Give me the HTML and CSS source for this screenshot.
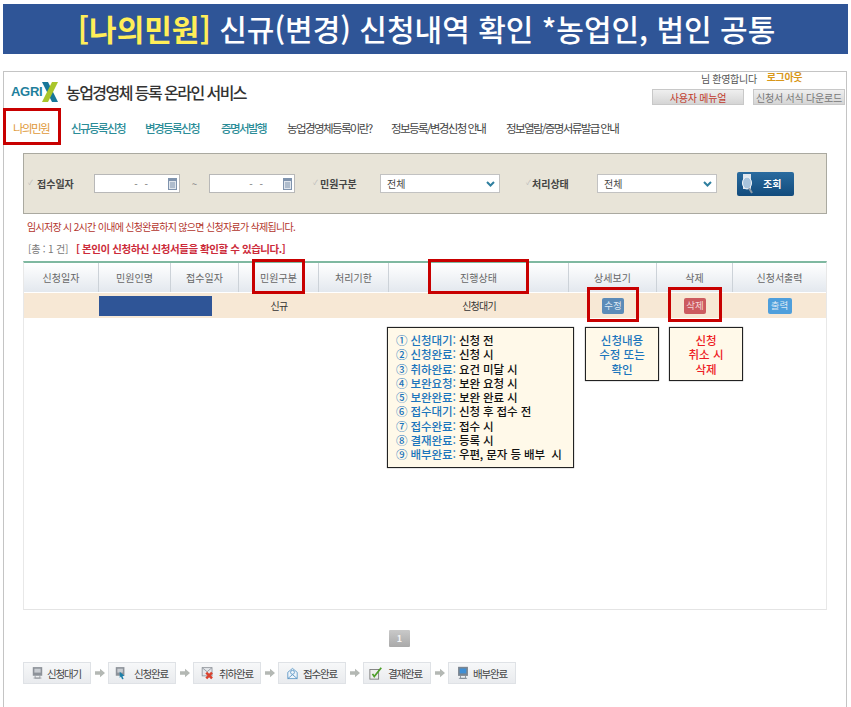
FILE: index.html
```html
<!DOCTYPE html>
<html lang="ko">
<head>
<meta charset="utf-8">
<title>나의민원</title>
<link rel="stylesheet" href="styles.css">
</head>
<body>
<h1 class="banner"><span class="banner-key">[나의민원]</span> 신규(변경) 신청내역 확인 *농업인, 법인 공통</h1>
<main class="frame">
  <header class="top">
    <div class="brand">
      <span class="logo"><span class="logo-text">AGRI</span><svg class="logo-x" width="16" height="20" viewBox="0 0 16 20"><path d="M0 0h6l10 20h-6z" fill="#17779a"/><path d="M16 0h-6L0 20h6z" fill="#a9c52a"/></svg></span>
      <span class="brand-title">농업경영체 등록 온라인 서비스</span>
    </div>
    <div class="util">
      <div class="welcome"><span>님 환영합니다</span><a class="logout">로그아웃</a></div>
      <div class="util-buttons"><a class="ubtn ubtn-red">사용자 메뉴얼</a><a class="ubtn ubtn-gray">신청서 서식 다운로드</a></div>
    </div>
  </header>
  <nav class="nav">
    <a class="nav-item nav-on">나의민원</a>
    <a class="nav-item nav-teal">신규등록신청</a>
    <a class="nav-item nav-teal">변경등록신청</a>
    <a class="nav-item nav-teal">증명서발행</a>
    <a class="nav-item">농업경영체등록이란?</a>
    <a class="nav-item">정보등록/변경신청 안내</a>
    <a class="nav-item">정보열람/증명서류발급 안내</a>
  </nav>
  <section class="search">
    <span class="label label-date">접수일자</span>
    <span class="date"><span class="date-val">- -</span><svg width="9" height="12" viewBox="0 0 9 12"><rect width="9" height="12" fill="#7f93ad"/><rect x="1" y="3" width="7" height="8" fill="#dfe5ec"/><path d="M2 5h5M2 7h5M2 9h5" stroke="#7f93ad"/></svg></span>
    <span class="tilde">~</span>
    <span class="date"><span class="date-val">- -</span><svg width="9" height="12" viewBox="0 0 9 12"><rect width="9" height="12" fill="#7f93ad"/><rect x="1" y="3" width="7" height="8" fill="#dfe5ec"/><path d="M2 5h5M2 7h5M2 9h5" stroke="#7f93ad"/></svg></span>
    <span class="label label-type">민원구분</span>
    <span class="select select-type">전체<svg width="9" height="6" viewBox="0 0 9 6"><path d="M1 1l3.500 3.500L8 1" fill="none" stroke="#2f7f9f" stroke-width="2"/></svg></span>
    <span class="label label-state">처리상태</span>
    <span class="select select-state">전체<svg width="9" height="6" viewBox="0 0 9 6"><path d="M1 1l3.500 3.500L8 1" fill="none" stroke="#2f7f9f" stroke-width="2"/></svg></span>
    <a class="go"><svg width="11" height="20" viewBox="0 0 11 20"><path d="M1 0h8v15H1z" fill="#dfe6ee"/><ellipse cx="5" cy="9" rx="4.500" ry="6" fill="#a9c4dc" stroke="#f3f6f9"/><path d="M7 14l3 5" stroke="#8c99a6" stroke-width="2"/></svg><span>조회</span></a>
  </section>
  <p class="warn">임시저장 시 2시간 이내에 신청완료하지 않으면 신청자료가 삭제됩니다.</p>
  <p class="count"><span class="count-n">[총 : 1 건]</span><strong>[ 본인이 신청하신 신청서들을 확인할 수 있습니다.]</strong></p>
  <section class="table">
    <div class="row head">
      <div>신청일자</div><div>민원인명</div><div>접수일자</div><div>민원구분</div><div>처리기한</div><div>진행상태</div><div>상세보기</div><div>삭제</div><div>신청서출력</div>
    </div>
    <div class="row data">
      <div></div><div class="mask-cell"><span class="mask"></span></div><div>신규</div><div></div><div>신청대기</div>
      <div><a class="mini mini-blue">수정</a></div><div><a class="mini mini-red">삭제</a></div><div><a class="mini mini-sky">출력</a></div>
    </div>
    <span class="mark mark-type"></span>
    <span class="mark mark-state"></span>
    <span class="mark mark-edit"></span>
    <span class="mark mark-del"></span>
    <div class="note note-list">
      <p><b>① 신청대기:</b> 신청 전</p>
      <p><b>② 신청완료:</b> 신청 시</p>
      <p><b>③ 취하완료:</b> 요건 미달 시</p>
      <p><b>④ 보완요청:</b> 보완 요청 시</p>
      <p><b>⑤ 보완완료:</b> 보완 완료 시</p>
      <p><b>⑥ 접수대기:</b> 신청 후 접수 전</p>
      <p><b>⑦ 접수완료:</b> 접수 시</p>
      <p><b>⑧ 결재완료:</b> 등록 시</p>
      <p><b>⑨ 배부완료:</b> 우편, 문자 등 배부&nbsp; 시</p>
    </div>
    <div class="note note-edit"><p>신청내용</p><p>수정 또는</p><p>확인</p></div>
    <div class="note note-del"><p>신청</p><p>취소 시</p><p>삭제</p></div>
  </section>
  <div class="pager"><a class="page">1</a></div>
  <div class="steps">
    <span class="step"><svg width="11" height="14" viewBox="0 0 14 17"><rect x="1" y="1" width="12" height="11" fill="#8d9299"/><rect x="3" y="3" width="8" height="5" fill="#c9cdd2"/><path d="M4 12v3h6v-3M2 15h10" stroke="#8d9299" fill="none"/></svg>신청대기</span>
    <svg class="arrow" width="10" height="10" viewBox="0 0 12 12"><path d="M0 4h6V1l6 5-6 5V8H0z" fill="#b4b8b4"/></svg>
    <span class="step"><svg width="11" height="14" viewBox="0 0 14 17"><rect x="1" y="1" width="11" height="11" fill="#8d9299"/><rect x="3" y="3" width="7" height="5" fill="#c9cdd2"/><path d="M6 7l6 5-2.500.5 1.500 3.500-2 .5-1.500-3.500L6 15z" fill="#1d7fa8"/></svg>신청완료</span>
    <svg class="arrow" width="10" height="10" viewBox="0 0 12 12"><path d="M0 4h6V1l6 5-6 5V8H0z" fill="#b4b8b4"/></svg>
    <span class="step"><svg width="13" height="14" viewBox="0 0 15 17"><rect x="1" y="2" width="12" height="10" fill="#e4e6ea" stroke="#8d9299"/><path d="M1 2l6 5 6-5" fill="none" stroke="#8d9299"/><path d="M6 8l7 7M13 8l-7 7" stroke="#d9412e" stroke-width="3"/></svg>취하완료</span>
    <svg class="arrow" width="10" height="10" viewBox="0 0 12 12"><path d="M0 4h6V1l6 5-6 5V8H0z" fill="#b4b8b4"/></svg>
    <span class="step"><svg width="11" height="13" viewBox="0 0 14 15"><path d="M1 6l6-5 6 5v8H1z" fill="#eef4fa" stroke="#4f8fc0"/><circle cx="7" cy="6" r="2.500" fill="none" stroke="#4f8fc0"/><path d="M1 14l6-5 6 5" fill="none" stroke="#4f8fc0"/></svg>접수완료</span>
    <svg class="arrow" width="10" height="10" viewBox="0 0 12 12"><path d="M0 4h6V1l6 5-6 5V8H0z" fill="#b4b8b4"/></svg>
    <span class="step"><svg width="14" height="14" viewBox="0 0 16 16"><rect x="1" y="4" width="10" height="11" fill="#eee" stroke="#777"/><path d="M4 9l2 3 8-10" fill="none" stroke="#4e9e2a" stroke-width="2"/></svg>결재완료</span>
    <svg class="arrow" width="10" height="10" viewBox="0 0 12 12"><path d="M0 4h6V1l6 5-6 5V8H0z" fill="#b4b8b4"/></svg>
    <span class="step"><svg width="10" height="14" viewBox="0 0 12 17"><rect x="0" y="1" width="12" height="11" fill="#7b8590"/><rect x="2" y="3" width="8" height="6" fill="#3f8fd6"/><path d="M3 12v3h6v-3M1 15h10" stroke="#7b8590" fill="none"/></svg>배부완료</span>
  </div>
  <span class="mark mark-nav"></span>
</main>
</body>
</html>
```

FILE: styles.css
```css
* { box-sizing: border-box; }
html, body { margin: 0; padding: 0; }
body {
  width: 851px;
  height: 707px;
  overflow: hidden;
  background: #fff;
  font-family: "Noto Sans CJK KR", "Noto Sans", sans-serif;
  color: #333;
}
p { margin: 0; }
.banner {
  margin: 4px 3px 17px;
  height: 50px;
  padding-left: 2px;
  background: #2f5597;
  color: #fff;
  font-size: 30px;
  font-weight: 500;
  line-height: 49px;
  text-align: center;
  white-space: nowrap;
}
.banner-key { color: #ffee58; font-weight: 700; }
.frame {
  position: relative;
  margin: 0 4px 0 3px;
  height: 636px;
  border: 1px solid #c4c4c4;
  border-bottom: 0;
}
.top { display: flex; justify-content: space-between; height: 37px; }
.brand { display: flex; align-items: center; height: 37px; padding: 0 0 0 7px; margin-top: 1px; }
.logo { display: flex; align-items: center; width: 55px; }
.logo-text { color: #1f7f9c; font-size: 13px; font-weight: 700; letter-spacing: -.3px; font-family: "Liberation Sans", sans-serif; }
.logo-x { margin-left: 0; }
.brand-title { font-size: 16px; font-weight: 500; color: #333; letter-spacing: -1.55px; white-space: nowrap; }
.util { display: flex; flex-direction: column; align-items: flex-end; padding-right: 1px; }
.welcome { display: flex; gap: 10px; align-items: center; height: 15px; margin: -1px 43px 0 0; font-size: 10px; color: #555; letter-spacing: -.3px; }
.logout { color: #d8971a; font-weight: 700; letter-spacing: -.4px; margin-top: -4px; }
.util-buttons { display: flex; gap: 9px; margin-top: 3px; }
.ubtn {
  height: 16px;
  font-size: 10px;
  line-height: 15px;
  text-align: center;
  background: linear-gradient(#efefef, #d5d5d5);
  border: 1px solid #c8c8c8;
  letter-spacing: -.2px;
  white-space: nowrap;
}
.ubtn-red { width: 92px; color: #c0392b; }
.ubtn-gray { width: 92px; color: #777; }
.nav { display: flex; align-items: center; height: 37px; padding-left: 9px; font-size: 11.500px; letter-spacing: -1.6px; color: #444; white-space: nowrap; }
.nav-item { display: block; }
.nav-on { color: #e0993a; width: 58px; }
.nav-teal { color: #2b8c97; font-weight: 500; }
.nav-item:nth-child(2) { width: 74px; }
.nav-item:nth-child(3) { width: 76px; }
.nav-item:nth-child(4) { width: 66px; }
.nav-item:nth-child(5) { width: 104px; }
.nav-item:nth-child(6) { width: 115px; }
.search {
  display: flex;
  align-items: center;
  height: 61px;
  margin: 7px 19px 0 19px;
  padding-left: 1px;
  background: #e8e4d8;
  border: 1px solid #aaa9a0;
  font-size: 10px;
  color: #333;
}
.label { font-weight: 700; white-space: nowrap; padding-left: 12px; position: relative; color: #444; }
.label::before { content: "✓"; position: absolute; left: 3px; top: 1px; font-size: 7px; color: #bbb; font-weight: 400; }
.label-date { width: 69px; }
.label-type { width: 70px; margin-left: 15px; padding-left: 10px; }
.label-state { width: 74px; margin-left: 23px; padding-left: 9px; }
.date { display: flex; align-items: center; justify-content: flex-end; gap: 18px; width: 86px; height: 19px; padding-right: 2px; background: #fff; border: 1px solid #b8b8b8; color: #777; }
.date-val { letter-spacing: 2px; font-size: 10px; }
.tilde { width: 29px; text-align: center; color: #888; font-size: 10px; }
.select { display: flex; align-items: center; justify-content: space-between; height: 19px; padding: 0 4px 0 6px; background: #fff; border: 1px solid #c2c2c2; font-size: 10px; color: #444; }
.select-type { width: 120px; }
.select-state { width: 120px; }
.go {
  display: flex;
  align-items: center;
  gap: 10px;
  width: 57px;
  height: 24px;
  margin-left: 20px;
  padding-left: 5px;
  background: linear-gradient(#2a6b9f, #124b7c);
  border-radius: 2px;
  color: #fff;
  font-size: 10px;
  font-weight: 700;
}
.warn { margin: 6px 0 0 23px; font-size: 10px; line-height: 14px; color: #b3352c; letter-spacing: -.7px; white-space: nowrap; }
.count { margin: 8px 0 0 24px; font-size: 10.500px; line-height: 14px; white-space: nowrap; }
.count-n { color: #777; margin-right: 8px; font-size: 10px; letter-spacing: -.2px; }
.count strong { color: #cc2b3a; font-weight: 700; letter-spacing: -.45px; }
.table {
  position: relative;
  height: 349px;
  margin: 5px 19px 0 19px;
  border-top: 2px solid #7fb8a0;
  border-bottom: 1px solid #e4e4e4;
  border-left: 1px solid #e8e8e8;
  border-right: 1px solid #e8e8e8;
}
.row { display: grid; grid-template-columns: 75px 72px 68px 80px 70px 180px 88px 76px 93px; align-items: stretch; text-align: center; }
.row > div { display: flex; align-items: center; justify-content: center; }
.head { height: 29px; background: linear-gradient(#fff, #e3e8ee); color: #666; font-size: 10px; }
.head > div { border-right: 1px solid #ccd2d8; }
.head > div:last-child { border-right: 0; }
.data { height: 25px; margin-top: 1px; background: #f7e8d5; color: #333; font-size: 10px; letter-spacing: -.8px; }
.row > .mask-cell { grid-column: span 2; justify-content: flex-start; }
.mask { display: block; width: 113px; height: 20px; background: #2f5597; }
.mini { display: block; width: 22px; height: 16px; line-height: 15px; font-size: 9.500px; letter-spacing: 0; border-radius: 2px; text-align: center; color: #dde8f4; }
.mini-blue { background: #5c8bb8; }
.mini-red { background: #cc5a5f; color: #f3d6d6; }
.mini-sky { background: #4f9fdc; width: 24px; }
.mark { position: absolute; border: 3px solid #c80000; display: block; }
.mark-nav { left: -1px; top: 36px; width: 58px; height: 37px; }
.mark-type { left: 228px; top: -4px; width: 53px; height: 35px; }
.mark-state { left: 404px; top: -4px; width: 101px; height: 35px; }
.mark-edit { left: 563px; top: 24px; width: 52px; height: 35px; }
.mark-del { left: 644px; top: 24px; width: 54px; height: 35px; }
.note {
  position: absolute;
  top: 64px;
  background: #fff9e9;
  border: 1px solid #222;
  box-shadow: 0 0 1px #666;
  font-size: 11.500px;
  font-weight: 500;
}
.note p { height: 14.300px; line-height: 14.300px; }
.note-list { left: 363px; width: 187px; height: 141px; padding: 5px 8px; color: #111; letter-spacing: -.1px; white-space: nowrap; }
.note-list b { color: #1b75bc; font-weight: 500; }
.note-edit { left: 561px; width: 74px; height: 54px; padding-top: 5px; text-align: center; color: #1b75bc; }
.note-del { left: 645px; width: 74px; height: 54px; padding-top: 5px; text-align: center; color: #ee1c25; }
.pager { display: flex; justify-content: center; margin-top: 20px; padding-right: 51px; }
.page { display: block; width: 21px; height: 17px; background: linear-gradient(#c9c9c9, #a9a9a9); color: #f4f4f4; font-size: 9px; font-weight: 700; line-height: 17px; text-align: center; border-radius: 1px; }
.steps { display: flex; align-items: center; margin: 15px 0 0 19px; }
.step {
  display: flex;
  align-items: center;
  gap: 5px;
  width: 68px;
  height: 22px;
  padding-left: 8px;
  background: linear-gradient(#f7f8f9, #e9ebee);
  border: 1px solid #dfe2e6;
  font-size: 10.500px;
  letter-spacing: -1.200px;
  color: #444;
  white-space: nowrap;
}
.step:nth-of-type(1) { gap: 4px; }
.step:nth-of-type(2) { gap: 8px; padding-left: 6px; }
.step:nth-of-type(3) { padding-left: 7px; }
.step:nth-of-type(4) { padding-left: 8px; }
.step:nth-of-type(5) { padding-left: 5px; }
.step:nth-of-type(6) { padding-left: 9px; }
.arrow { margin: 0 3px 0 4px; flex: none; }
```
